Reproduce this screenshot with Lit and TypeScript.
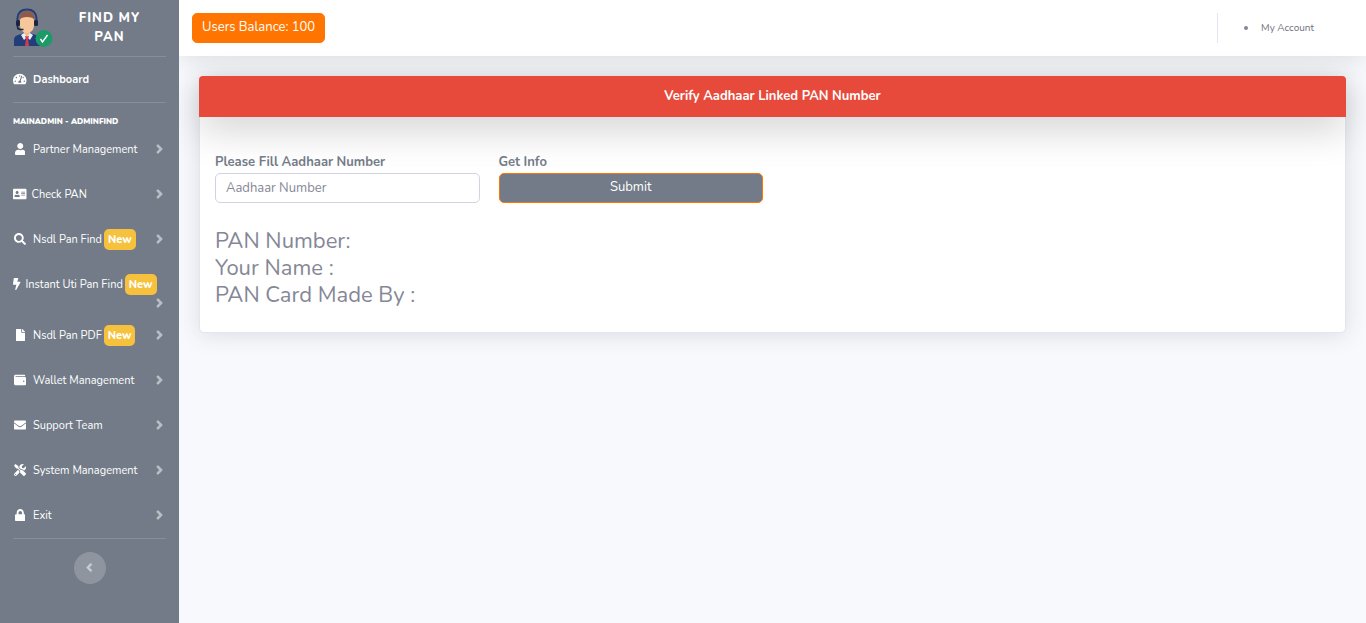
import { LitElement, html, css, nothing } from "lit";
import { customElement } from "lit/decorators.js";
import { classMap } from "lit/directives/class-map.js";

interface Icon {
  width: number;
  path: string;
}

interface NavItem {
  label: string;
  icon: Icon;
  isNew?: boolean;
  fit?: boolean;
  wrap?: boolean;
}

const GAUGE: Icon = {
  width: 576,
  path: "M288 32C128.94 32 0 160.94 0 320c0 52.8 14.25 102.26 39.06 144.8 5.61 9.62 16.3 15.2 27.44 15.2h443c11.14 0 21.83-5.58 27.44-15.2C561.75 422.26 576 372.8 576 320c0-159.06-128.94-288-288-288zm0 64c14.71 0 26.58 10.13 30.32 23.65-1.11 2.26-2.64 4.23-3.45 6.67l-9.22 27.67c-5.13 3.49-10.97 6.01-17.64 6.01-17.67 0-32-14.33-32-32S270.33 96 288 96zM96 384c-17.67 0-32-14.33-32-32s14.33-32 32-32 32 14.33 32 32-14.33 32-32 32zm48-160c-17.67 0-32-14.33-32-32s14.33-32 32-32 32 14.33 32 32-14.33 32-32 32zm246.77-72.41l-61.33 184C343.13 347.33 352 364.54 352 384c0 11.72-3.38 22.55-8.88 32H232.88c-5.5-9.45-8.88-20.28-8.88-32 0-33.94 26.5-61.43 59.9-63.59l61.34-184.01c4.17-12.56 17.73-19.45 30.36-15.17 12.57 4.19 19.35 17.79 15.17 30.36zm14.66 57.2l15.52-46.55c3.47-1.29 7.13-2.23 11.05-2.23 17.67 0 32 14.33 32 32s-14.33 32-32 32c-11.38-.01-20.89-6.28-26.57-15.22zM480 384c-17.67 0-32-14.33-32-32s14.33-32 32-32 32 14.33 32 32-14.33 32-32 32z",
};
const USER: Icon = {
  width: 448,
  path: "M224 256c70.7 0 128-57.3 128-128S294.7 0 224 0 96 57.3 96 128s57.3 128 128 128zm89.6 32h-16.7c-22.2 10.2-46.9 16-72.9 16s-50.6-5.8-72.9-16h-16.7C60.2 288 0 348.2 0 422.4V464c0 26.5 21.5 48 48 48h352c26.5 0 48-21.5 48-48v-41.6c0-74.2-60.2-134.4-134.4-134.4z",
};
const CARD: Icon = {
  width: 576,
  path: "M528 32H48C21.5 32 0 53.5 0 80v352c0 26.5 21.5 48 48 48h480c26.5 0 48-21.5 48-48V80c0-26.5-21.5-48-48-48zm-352 96c35.3 0 64 28.7 64 64s-28.7 64-64 64-64-28.7-64-64 28.7-64 64-64zm112 236.8c0 10.6-10 19.2-22.4 19.2H86.4C74 384 64 375.4 64 364.8v-19.2c0-31.8 30.1-57.6 67.2-57.6h5c12.3 5.1 25.7 8 39.8 8s27.6-2.9 39.8-8h5c37.1 0 67.2 25.8 67.2 57.6v19.2zM512 312c0 4.4-3.6 8-8 8H360c-4.4 0-8-3.6-8-8v-16c0-4.4 3.6-8 8-8h144c4.4 0 8 3.6 8 8v16zm0-64c0 4.4-3.6 8-8 8H360c-4.4 0-8-3.6-8-8v-16c0-4.4 3.6-8 8-8h144c4.4 0 8 3.6 8 8v16zm0-64c0 4.4-3.6 8-8 8H360c-4.4 0-8-3.6-8-8v-16c0-4.4 3.6-8 8-8h144c4.4 0 8 3.6 8 8v16z",
};
const SEARCH: Icon = {
  width: 512,
  path: "M505 442.7L405.3 343c-4.5-4.5-10.6-7-17-7H372c27.6-35.3 44-79.7 44-128C416 93.1 322.9 0 208 0S0 93.1 0 208s93.1 208 208 208c48.3 0 92.7-16.4 128-44v16.3c0 6.4 2.5 12.5 7 17l99.7 99.7c9.4 9.4 24.6 9.4 33.9 0l28.3-28.3c9.4-9.4 9.4-24.6.1-34zM208 336c-70.7 0-128-57.2-128-128 0-70.7 57.2-128 128-128 70.7 0 128 57.2 128 128 0 70.7-57.2 128-128 128z",
};
const BOLT: Icon = {
  width: 320,
  path: "M296 160H180.6l42.6-129.8C227.2 15 215.7 0 200 0H56C44 0 33.8 8.9 32.2 20.8l-32 240C-1.7 275.2 9.5 288 24 288h118.7L96.6 482.5c-3.6 15.2 8 29.5 23.3 29.5 8.4 0 16.4-4.4 20.8-12l176-304c9.3-15.9-2.2-36-20.7-36z",
};
const FILE: Icon = {
  width: 384,
  path: "M224 136V0H24C10.7 0 0 10.7 0 24v464c0 13.3 10.7 24 24 24h336c13.3 0 24-10.7 24-24V160H248c-13.2 0-24-10.8-24-24zm160-14.1v6.1H256V0h6.1c6.4 0 12.5 2.5 17 7l97.9 98c4.5 4.5 7 10.6 7 16.9z",
};
const WALLET: Icon = {
  width: 512,
  path: "M461.2 128H80c-8.84 0-16-7.16-16-16s7.16-16 16-16h384c8.84 0 16-7.16 16-16 0-26.51-21.49-48-48-48H64C28.65 32 0 60.65 0 96v320c0 35.35 28.65 64 64 64h397.2c28.02 0 50.8-21.53 50.8-48V176c0-26.47-22.78-48-50.8-48zM416 336c-17.67 0-32-14.33-32-32s14.33-32 32-32 32 14.33 32 32-14.33 32-32 32z",
};
const ENVELOPE: Icon = {
  width: 512,
  path: "M502.3 190.8c3.9-3.1 9.7-.2 9.7 4.7V400c0 26.5-21.5 48-48 48H48c-26.5 0-48-21.5-48-48V195.6c0-5 5.7-7.8 9.7-4.7 22.4 17.4 52.1 39.5 154.1 113.6 21.1 15.4 56.7 47.8 92.2 47.6 35.7.3 72-32.8 92.3-47.6 102-74.1 131.6-96.3 154-113.7zM256 320c23.2.4 56.6-29.2 73.4-41.4 132.7-96.3 142.8-104.7 173.4-128.7 5.8-4.5 9.2-11.5 9.2-18.9v-19c0-26.5-21.5-48-48-48H48c-26.5 0-48 21.5-48 48v19c0 7.4 3.4 14.3 9.2 18.9 30.6 23.9 40.7 32.4 173.4 128.7 16.8 12.2 50.2 41.8 73.4 41.4z",
};
const TOOLS: Icon = {
  width: 512,
  path: "M501.1 395.7L384 278.6c-23.1-23.1-57.6-27.6-85.4-13.9L192 158.1V96L64 0 0 64l96 128h62.1l106.6 106.6c-13.6 27.8-9.2 62.3 13.9 85.4l117.1 117.1c14.6 14.6 38.2 14.6 52.7 0l52.7-52.7c14.5-14.6 14.5-38.2 0-52.7zM331.7 225c28.3 0 54.9 11 74.9 31l19.4 19.4c15.8-6.9 30.8-16.5 43.8-29.5 37.1-37.1 49.7-89.3 37.9-136.7-2.2-9-13.5-12.1-20.1-5.5l-74.4 74.4-67.9-11.3L334 98.9l74.4-74.4c6.6-6.6 3.4-17.9-5.7-20.2-47.4-11.7-99.6.9-136.6 37.9-28.5 28.5-41.9 66.1-41.2 103.6l82.1 82.1c8.1-1.9 16.5-2.9 24.7-2.9zm-103.9 82l-56.7-56.7L18.7 402.8c-25 25-25 65.5 0 90.5s65.5 25 90.5 0l123.6-123.6c-7.6-19.9-9.9-41.6-5-62.7zM64 472c-13.2 0-24-10.8-24-24 0-13.3 10.7-24 24-24s24 10.7 24 24c0 13.2-10.7 24-24 24z",
};
const LOCK: Icon = {
  width: 448,
  path: "M400 224h-24v-72C376 68.2 307.8 0 224 0S72 68.2 72 152v72H48c-26.5 0-48 21.5-48 48v192c0 26.5 21.5 48 48 48h352c26.5 0 48-21.5 48-48V272c0-26.5-21.5-48-48-48zm-104 0H152v-72c0-39.7 32.3-72 72-72s72 32.3 72 72v72z",
};
const ANGLE_RIGHT: Icon = {
  width: 256,
  path: "M224.3 273l-136 136c-9.4 9.4-24.6 9.4-33.9 0l-22.6-22.6c-9.4-9.4-9.4-24.6 0-33.9l96.4-96.4-96.4-96.4c-9.4-9.4-9.4-24.6 0-33.9L54.3 103c9.4-9.4 24.6-9.4 33.9 0l136 136c9.5 9.4 9.5 24.6.1 34z",
};
const ANGLE_LEFT: Icon = {
  width: 256,
  path: "M31.7 239l136-136c9.4-9.4 24.6-9.4 33.9 0l22.6 22.6c9.4 9.4 9.4 24.6 0 33.9L127.9 256l96.4 96.4c9.4 9.4 9.4 24.6 0 33.9L201.7 409c-9.4 9.4-24.6 9.4-33.9 0l-136-136c-9.5-9.4-9.5-24.6-.1-34z",
};

const NAV: NavItem[] = [
  { label: "Partner Management", icon: USER },
  { label: "Check PAN", icon: CARD, fit: true },
  { label: "Nsdl Pan Find", icon: SEARCH, isNew: true },
  { label: "Instant Uti Pan Find", icon: BOLT, isNew: true, fit: true, wrap: true },
  { label: "Nsdl Pan PDF", icon: FILE, isNew: true },
  { label: "Wallet Management", icon: WALLET },
  { label: "Support Team", icon: ENVELOPE },
  { label: "System Management", icon: TOOLS },
  { label: "Exit", icon: LOCK },
];

const glyph = (icon: Icon, cls: string) => html`
  <svg class=${cls} viewBox="0 0 ${icon.width} 512" fill="currentColor" aria-hidden="true">
    <path d=${icon.path}></path>
  </svg>
`;

@customElement("app-sidebar")
export class AppSidebar extends LitElement {
  static styles = css`
    :host {
      display: flex;
      flex-direction: column;
      padding: 0 13px;
      background: #727b87;
      color: #fff;
      font-size: 11px;
      line-height: 19px;
    }
    * {
      box-sizing: border-box;
    }
    a {
      color: inherit;
      text-decoration: none;
    }
    .brand {
      display: flex;
      align-items: center;
      height: 56px;
      font-size: 13px;
      font-weight: 800;
      letter-spacing: 1px;
      text-align: center;
      text-transform: uppercase;
    }
    .logo {
      flex: none;
      width: 40px;
      height: 40px;
    }
    .name {
      flex: 1;
      padding: 0 13px;
    }
    .divider {
      width: 100%;
      height: 1px;
      margin: 0;
      border: 0;
      background: rgba(255, 255, 255, 0.15);
    }
    .heading {
      margin: 9px 0 -4px;
      font-size: 8px;
      font-weight: 900;
      text-transform: uppercase;
    }
    .list {
      margin: 0;
      padding: 0;
      list-style: none;
    }
    .link {
      display: flex;
      flex-wrap: wrap;
      align-items: center;
      padding: 13px 0;
      white-space: nowrap;
    }
    .link.wrap {
      padding-bottom: 0;
    }
    .link.active {
      font-weight: 700;
    }
    .slot {
      display: flex;
      justify-content: center;
      width: 14px;
      margin-right: 6px;
      padding-bottom: 2px;
    }
    .slot.fit {
      width: auto;
      margin-right: 5px;
    }
    .icon {
      display: block;
      height: 12px;
    }
    .badge {
      margin: -1px 0 -1px 2px;
      padding: 1px 4px;
      border-radius: 5px;
      background: #f6c23e;
      font-weight: 800;
    }
    .chevron {
      height: 19px;
      padding: 2px 0 3px;
      margin-left: auto;
      margin-right: 3px;
      color: rgba(255, 255, 255, 0.5);
      stroke: currentColor;
      stroke-width: 16px;
    }
    .wrap .chevron {
      margin-left: 143px;
    }
    .toggle {
      display: grid;
      place-items: center;
      align-self: center;
      width: 32px;
      height: 32px;
      margin-top: 13px;
      padding: 0 0 2px;
      border: 0;
      border-radius: 50%;
      background: rgba(255, 255, 255, 0.2);
      color: rgba(255, 255, 255, 0.5);
    }
    .toggle .icon {
      height: 13px;
      stroke: currentColor;
      stroke-width: 16px;
    }
  `;

  render() {
    return html`
      <a class="brand" href="#">
        <svg class="logo" viewBox="0 0 40 40" aria-hidden="true">
          <path d="M1 38v-6q0-4 4-5l6-2h6l6 2q4 1 4 5v6z" fill="#233d7b"></path>
          <path d="M8 27l3-2h6l3 2-3 5-3-3-3 3z" fill="#e8eef8"></path>
          <path d="M12 28h4l-1 3 1 7h-4l1-7z" fill="#d23b4b"></path>
          <path d="M11 21h6v4l-3 4-3-4z" fill="#f0b888"></path>
          <path d="M7 8h14v10q-1 7-7 7t-7-7z" fill="#f6c79a"></path>
          <path d="M6.500 12V9q1-6 7.500-6t7.500 6v3l-2-2q-5.500-2-11 0z" fill="#8f5a48"></path>
          <path d="M4.500 13v-3q1-8.500 9.500-8.500t9.500 8.500v3" fill="none" stroke="#233d7b" stroke-width="2"></path>
          <rect x="3" y="12" width="4" height="6" rx="1.5" fill="#1b2440"></rect>
          <rect x="21" y="12" width="4" height="6" rx="1.5" fill="#1b2440"></rect>
          <path d="M4.500 17v2q0 2.500 3 2.500h3" fill="none" stroke="#1b2440" stroke-width="1.500"></path>
          <circle cx="31" cy="30.500" r="8.500" fill="#1c9a68"></circle>
          <path d="M27.500 31l2 3 5-7" fill="none" stroke="#fff" stroke-width="1.400"></path>
        </svg>
        <span class="name">Find My PAN</span>
      </a>
      <hr class="divider" />
      <a class="link active" href="#">
        <span class="slot">${glyph(GAUGE, "icon")}</span>
        <span>Dashboard</span>
      </a>
      <hr class="divider" />
      <div class="heading">MainAdmin - AdminFind</div>
      <ul class="list">
        ${NAV.map(
          (item) => html`
            <li>
              <a class=${classMap({ link: true, wrap: !!item.wrap })} href="#">
                <span class=${classMap({ slot: true, fit: !!item.fit })}>${glyph(item.icon, "icon")}</span>
                <span>${item.label}</span>
                ${item.isNew ? html`<span class="badge">New</span>` : nothing}
                ${glyph(ANGLE_RIGHT, "chevron")}
              </a>
            </li>
          `,
        )}
      </ul>
      <hr class="divider" />
      <button class="toggle" type="button" aria-label="Collapse sidebar">${glyph(ANGLE_LEFT, "icon")}</button>
    `;
  }
}

@customElement("app-root")
export class AppRoot extends LitElement {
  static styles = css`
    :host {
      display: grid;
      grid-template-columns: 179px minmax(0, 1fr);
      min-height: 100vh;
      background: #f8f9fc;
      color: #858796;
      font-family: Nunito, Lato, sans-serif;
      font-size: 13px;
      line-height: 19px;
    }
    * {
      box-sizing: border-box;
    }
    .content {
      overflow: hidden;
    }
    .topbar {
      display: flex;
      align-items: center;
      justify-content: space-between;
      height: 56px;
      padding: 0 52px 0 13px;
      background: #fff;
      box-shadow: 0 2px 22px rgba(58, 59, 69, 0.15);
    }
    .btn {
      height: 30px;
      padding: 0 9px 2px;
      border: 1px solid #ff7500;
      border-radius: 5px;
      background: #ff7500;
      color: #fff;
      font: inherit;
    }
    .account {
      display: flex;
      align-items: center;
      height: 30px;
      padding-left: 26px;
      border-left: 1px solid #e3e6f0;
      font-size: 10px;
    }
    .dot {
      width: 4px;
      height: 4px;
      margin-right: 13px;
      border-radius: 50%;
      background: #858796;
    }
    .account a {
      color: #6e707e;
      text-decoration: none;
    }
    .card {
      margin: 20px;
      border: 1px solid #e3e6f0;
      border-radius: 5px;
      background: #fff;
      box-shadow: 0 2px 22px rgba(58, 59, 69, 0.15);
    }
    .title {
      margin: -1px -1px 0;
      padding: 11px 16px;
      border-radius: 4px 4px 0 0;
      background: #e74a3b;
      box-shadow: 0 13px 38px rgba(0, 0, 0, 0.175);
      color: #fff;
      font-size: 13px;
      font-weight: 700;
      text-align: center;
    }
    .body {
      padding: 36px 15px 23px;
    }
    .fields {
      display: grid;
      grid-template-columns: repeat(4, minmax(0, 1fr));
      gap: 19px;
    }
    .field {
      display: flex;
      flex-direction: column;
      gap: 1px;
    }
    .label {
      font-weight: 700;
      color: #727b87;
    }
    .input {
      height: 30px;
      padding: 0 10px;
      border: 1px solid #d1d3e2;
      border-radius: 5px;
      background: #fff;
      color: #6e707e;
      font: inherit;
    }
    .input::placeholder {
      color: #858796;
      opacity: 1;
    }
    .submit {
      background: #727b87;
    }
    .result {
      margin: 25px 0 0;
      font-size: 22px;
      font-weight: 400;
      line-height: 27px;
    }
  `;

  render() {
    return html`
      <app-sidebar></app-sidebar>
      <div class="content">
        <header class="topbar">
          <button class="btn" type="button">Users Balance: 100</button>
          <div class="account"><span class="dot"></span><a href="#">My Account</a></div>
        </header>
        <main>
          <section class="card">
            <h1 class="title">Verify Aadhaar Linked PAN Number</h1>
            <form class="body">
              <div class="fields">
                <div class="field">
                  <label class="label" for="aadhaar">Please Fill Aadhaar Number</label>
                  <input class="input" id="aadhaar" type="text" placeholder="Aadhaar Number" />
                </div>
                <div class="field">
                  <label class="label" for="submit">Get Info</label>
                  <button class="btn submit" id="submit" type="button">Submit</button>
                </div>
              </div>
              <h2 class="result">
                PAN Number:<br />
                Your Name :<br />
                PAN Card Made By :
              </h2>
            </form>
          </section>
        </main>
      </div>
    `;
  }
}
